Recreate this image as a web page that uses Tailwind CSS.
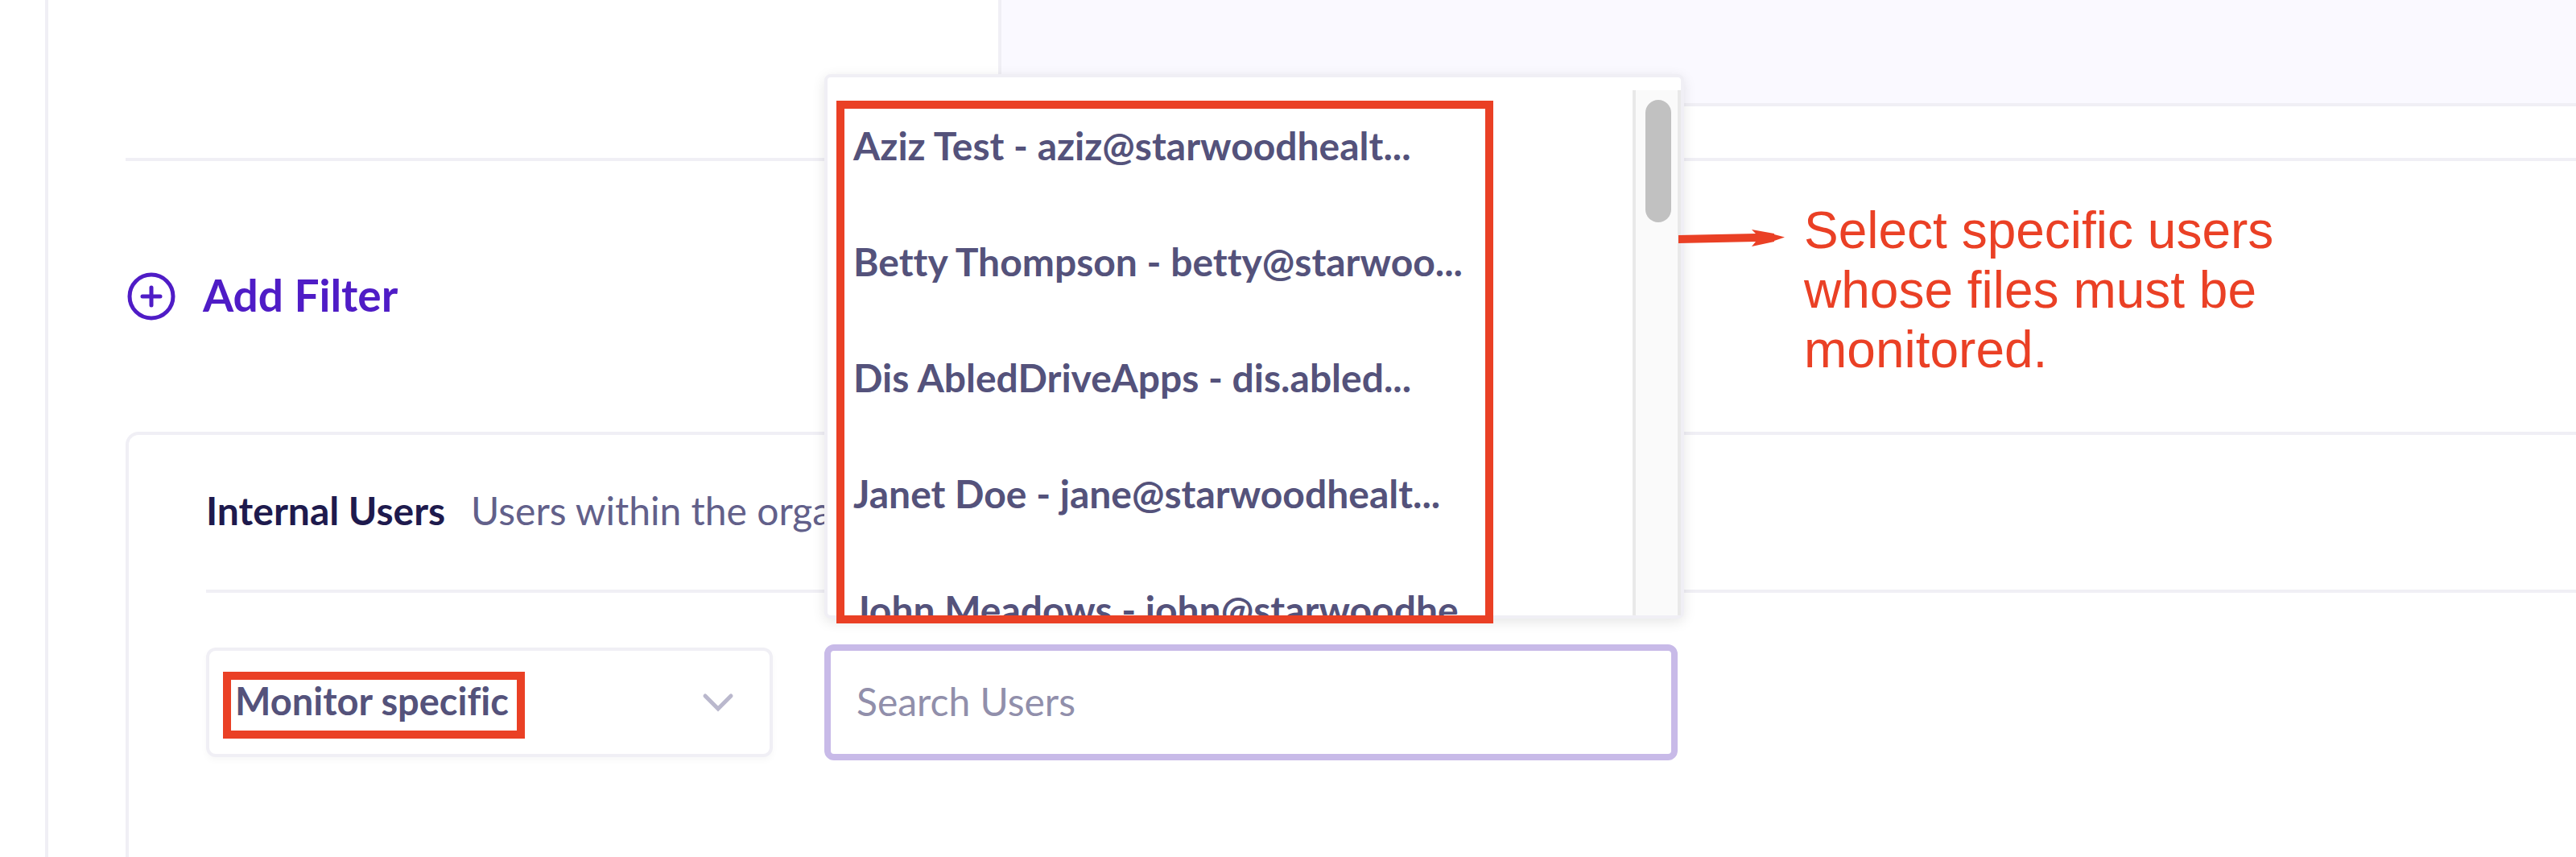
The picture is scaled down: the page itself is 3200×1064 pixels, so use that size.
<!DOCTYPE html>
<html lang="en">
<head>
<meta charset="utf-8">
<meta name="viewport" content="width=device-width, initial-scale=1">
<title>Monitoring filters</title>
<script src="https://cdn.jsdelivr.net/npm/@tailwindcss/browser@4"></script>
</head>
<body class="bg-white font-['Lato','Open_Sans',sans-serif] text-[48px] text-[#54527b] [font-variant-ligatures:none]">
<div class="flex h-screen overflow-hidden">
  <!-- Collapsed side rail -->
  <aside class="w-[60px] shrink-0 border-r-4 border-[#f0eff5]"></aside>

  <main class="flex min-w-0 flex-1 flex-col pl-24">
    <section class="flex h-33 shrink-0">
      <div class="w-[1084px] shrink-0"></div>
      <div class="flex-1 border-b-4 border-l-4 border-[#f0eff5] bg-[#faf9ff]"></div>
    </section>

    <hr class="mt-16 shrink-0 border-t-4 border-[#f0eff5]">

    <div class="flex h-84 shrink-0 items-center">
      <button type="button" class="flex items-center gap-8 text-[55px] leading-none font-bold text-[#4f1cc6]">
        <svg class="size-16" viewBox="0 0 64 64" fill="none" stroke="currentColor" stroke-width="5" stroke-linecap="round" aria-hidden="true">
          <circle cx="32" cy="32" r="27"/>
          <path d="M32 21v22M21 32h22"/>
        </svg>
        <span class="pb-1">Add Filter</span>
      </button>
    </div>

    <section class="flex-1 rounded-tl-2xl border-t-4 border-l-4 border-[#f0eff5] pl-24">
      <header class="flex h-48 items-center gap-8 pb-1 whitespace-nowrap">
        <h2 id="internal-users" class="font-bold text-[#1e1a4d]">Internal Users</h2>
        <p class="text-[#62608a]">Users within the organization</p>
      </header>
      <hr class="border-t-4 border-[#f0eff5]">

      <div class="mt-16 flex items-center gap-16">
        <div class="relative w-[704px] shrink-0">
          <select aria-labelledby="internal-users" class="h-34 w-full appearance-none rounded-xl border-4 border-[#f0eff5] bg-white pr-24 pb-1 pl-8 text-[47px] font-bold text-[#54527b] shadow-[0_4px_8px_rgba(0,0,0,0.03)]">
            <option>Monitor specific</option>
          </select>
          <svg class="pointer-events-none absolute top-14 right-12 h-6 w-10" viewBox="0 0 40 24" fill="none" stroke="#bab8cd" stroke-width="5" stroke-linecap="round" aria-hidden="true">
            <path d="M4 4l16 16L36 4"/>
          </svg>
          <div class="pointer-events-none absolute top-[30px] left-[21px] h-[83px] w-[375px] border-10 border-[#ea4025]"></div>
        </div>

        <div class="relative w-[1060px] shrink-0">
          <input type="text" placeholder="Search Users" aria-label="Search Users" class="h-36 w-full rounded-xl border-8 border-[#c8bae8] bg-white pb-1 pl-8 outline-none placeholder:text-[#918fab]">

          <!-- Suggestions, opened above the field -->
          <div class="absolute bottom-full left-0 mb-8 h-[676px] w-[1068px] rounded-lg border-4 border-[#f0eff5] bg-white pt-4 shadow-[0_4px_16px_rgba(0,0,0,0.1)]">
            <div class="flex h-full overflow-hidden">
              <ul role="listbox" aria-label="Users" class="flex-1 pl-8 leading-[74px] font-bold whitespace-nowrap">
                <li role="option" class="h-36 pt-8">Aziz Test - aziz@starwoodhealt...</li>
                <li role="option" class="h-36 pt-8">Betty Thompson - betty@starwoo...</li>
                <li role="option" class="h-36 pt-8">Dis AbledDriveApps - dis.abled...</li>
                <li role="option" class="h-36 pt-8">Janet Doe - jane@starwoodhealt...</li>
                <li role="option" class="h-36 pt-8">John Meadows - john@starwoodhe...</li>
              </ul>
              <div class="w-15 border-x-4 border-[#e9e9e9] bg-[#fafafa] px-3 pt-3">
                <div class="h-38 w-8 rounded-full bg-[#c1c1c1]"></div>
              </div>
            </div>

            <div class="pointer-events-none absolute top-[29px] left-[11px] h-[649px] w-[816px] border-10 border-[#ea4025]"></div>

            <div class="absolute top-[153px] left-[1057px] flex gap-6 text-[#ea4025]">
              <svg class="mt-9 h-[22px] w-[132px]" viewBox="0 0 132 22" fill="currentColor" aria-hidden="true">
                <path d="M0 7L96 5L91 0L119 5V6L132 9.500L119 14V15L91 21L96 15L0 17Z"/>
              </svg>
              <p class="w-[620px] font-['Liberation_Sans',Arial,sans-serif] text-[64px] leading-[74px] [font-variant-ligatures:normal]">Select specific users whose files must be monitored.</p>
            </div>
          </div>
        </div>
      </div>
    </section>
  </main>
</div>
</body>
</html>
